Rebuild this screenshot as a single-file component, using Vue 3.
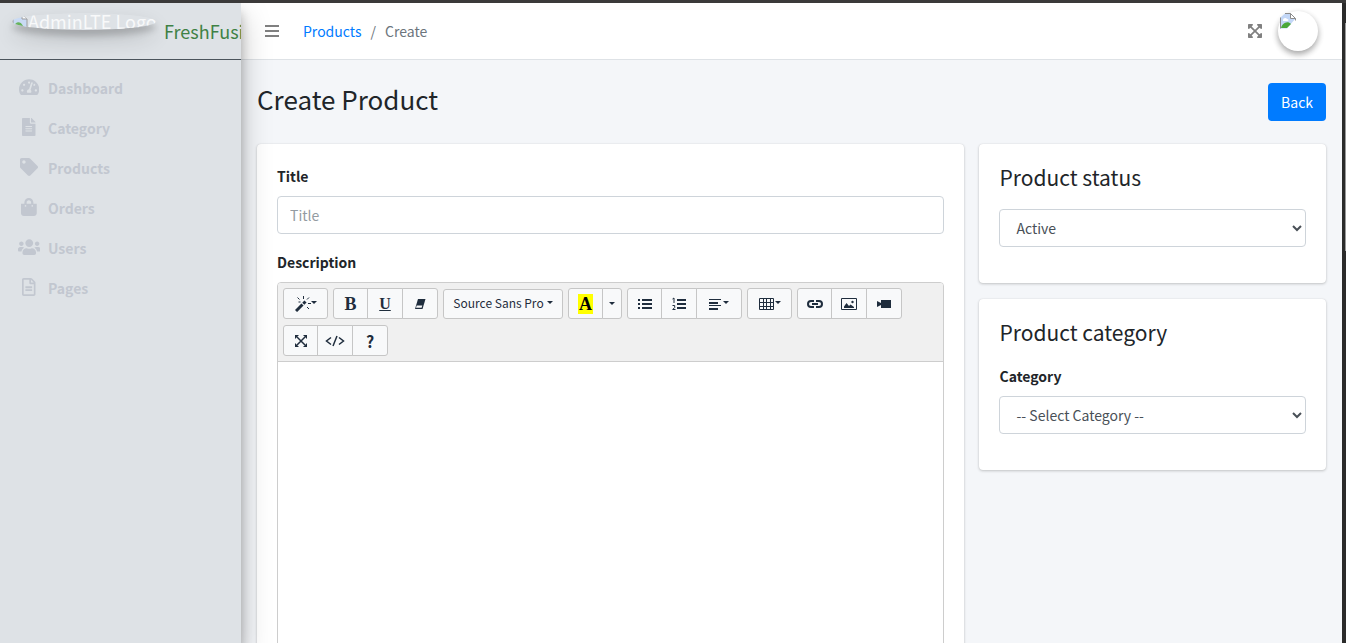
<script setup>
import { ref } from 'vue'

const fa = {
  gauge: { box: '0 0 576 512', d: 'M288 32C128.940 32 0 160.940 0 320c0 52.800 14.250 102.260 39.060 144.800 5.610 9.620 16.300 15.200 27.440 15.200h443c11.140 0 21.830-5.580 27.440-15.200C561.750 422.260 576 372.800 576 320c0-159.060-128.940-288-288-288zm0 64c14.710 0 26.580 10.130 30.320 23.650-1.110 2.260-2.640 4.230-3.450 6.670l-9.220 27.670c-5.130 3.490-10.970 6.010-17.640 6.010-17.670 0-32-14.330-32-32S270.330 96 288 96zM96 384c-17.670 0-32-14.330-32-32s14.330-32 32-32 32 14.330 32 32-14.330 32-32 32zm48-160c-17.670 0-32-14.330-32-32s14.330-32 32-32 32 14.330 32 32-14.330 32-32 32zm246.770-72.410l-61.330 184C343.130 347.330 352 364.540 352 384c0 11.720-3.380 22.550-8.880 32H232.880c-5.500-9.450-8.880-20.280-8.880-32 0-33.940 26.500-61.430 59.900-63.590l61.340-184.010c4.170-12.560 17.730-19.450 30.360-15.170 12.570 4.190 19.350 17.790 15.170 30.360zm14.660 57.200l15.520-46.550c3.470-1.290 7.130-2.230 11.050-2.230 17.670 0 32 14.330 32 32s-14.330 32-32 32c-11.380-.010-20.890-6.280-26.570-15.220zM480 384c-17.670 0-32-14.330-32-32s14.330-32 32-32 32 14.330 32 32-14.330 32-32 32z' },
  file: { box: '0 0 384 512', d: 'M224 136V0H24C10.700 0 0 10.700 0 24v464c0 13.300 10.700 24 24 24h336c13.300 0 24-10.700 24-24V160H248c-13.200 0-24-10.800-24-24zm64 236c0 6.600-5.400 12-12 12H108c-6.600 0-12-5.400-12-12v-8c0-6.600 5.400-12 12-12h168c6.600 0 12 5.400 12 12v8zm0-64c0 6.600-5.400 12-12 12H108c-6.600 0-12-5.400-12-12v-8c0-6.600 5.400-12 12-12h168c6.600 0 12 5.400 12 12v8zm0-72v8c0 6.600-5.400 12-12 12H108c-6.600 0-12-5.400-12-12v-8c0-6.600 5.400-12 12-12h168c6.600 0 12 5.400 12 12zm96-114.100v6.100H256V0h6.100c6.400 0 12.500 2.500 17 7l97.900 98c4.500 4.500 7 10.600 7 16.900z' },
  tag: { box: '0 0 512 512', d: 'M0 252.118V48C0 21.490 21.490 0 48 0h204.118a48 48 0 0 1 33.941 14.059l211.882 211.882c18.745 18.745 18.745 49.137 0 67.882L293.823 497.941c-18.745 18.745-49.137 18.745-67.882 0L14.059 286.059A48 48 0 0 1 0 252.118zM112 64c-26.510 0-48 21.490-48 48s21.490 48 48 48 48-21.490 48-48-21.490-48-48-48z' },
  bag: { box: '0 0 448 512', d: 'M352 160v-32C352 57.420 294.579 0 224 0 153.420 0 96 57.420 96 128v32H0v272c0 44.183 35.817 80 80 80h288c44.183 0 80-35.817 80-80V160h-96zm-192-32c0-35.290 28.710-64 64-64s64 28.710 64 64v32H160v-32zm160 120c-13.255 0-24-10.745-24-24s10.745-24 24-24 24 10.745 24 24-10.745 24-24 24zm-192 0c-13.255 0-24-10.745-24-24s10.745-24 24-24 24 10.745 24 24-10.745 24-24 24z' },
  users: { box: '0 0 640 512', d: 'M96 224c35.300 0 64-28.700 64-64s-28.700-64-64-64-64 28.700-64 64 28.700 64 64 64zm448 0c35.300 0 64-28.700 64-64s-28.700-64-64-64-64 28.700-64 64 28.700 64 64 64zm32 32h-64c-17.600 0-33.500 7.100-45.100 18.600 40.300 22.100 68.900 62 75.100 109.400h66c17.700 0 32-14.300 32-32v-32c0-35.300-28.700-64-64-64zm-256 0c61.900 0 112-50.100 112-112S381.900 32 320 32 208 82.100 208 144s50.100 112 112 112zm76.800 32h-8.300c-20.800 10-43.900 16-68.500 16s-47.600-6-68.500-16h-8.300C179.600 288 128 339.600 128 403.200V432c0 26.500 21.500 48 48 48h288c26.500 0 48-21.500 48-48v-28.800c0-63.600-51.600-115.200-115.200-115.200zm-223.700-13.400C161.500 263.100 145.600 256 128 256H64c-35.300 0-64 28.700-64 64v32c0 17.700 14.300 32 32 32h65.900c6.300-47.400 34.900-87.300 75.200-109.400z' },
  page: { box: '0 0 384 512', d: 'M288 248v28c0 6.600-5.400 12-12 12H108c-6.600 0-12-5.400-12-12v-28c0-6.600 5.400-12 12-12h168c6.600 0 12 5.400 12 12zm-12 72H108c-6.600 0-12 5.400-12 12v28c0 6.600 5.400 12 12 12h168c6.600 0 12-5.400 12-12v-28c0-6.600-5.400-12-12-12zm108-188.100V464c0 26.500-21.500 48-48 48H48c-26.500 0-48-21.500-48-48V48C0 21.500 21.500 0 48 0h204.100C264.800 0 277 5.100 286 14.100L369.900 98c9 8.900 14.100 21.200 14.100 33.900zm-128-80V128h76.100L256 51.900zM336 464V176H232c-13.300 0-24-10.700-24-24V48H48v416h288z' },
}

const expand = 'M448 344v112a23.940 23.940 0 0 1-24 24H312c-21.390 0-32.090-25.900-17-41l36.200-36.200L224 295.600 116.770 402.900 153 439c15.090 15.100 4.390 41-17 41H24a23.940 23.940 0 0 1-24-24V344c0-21.400 25.890-32.100 41-17l36.190 36.200L184.460 256 77.180 148.700 41 185c-15.100 15.100-41 4.400-41-17V56a23.940 23.940 0 0 1 24-24h112c21.390 0 32.090 25.900 17 41l-36.200 36.200L224 216.400l107.230-107.300L295 73c-15.090-15.100-4.390-41 17-41h112a23.940 23.940 0 0 1 24 24v112c0 21.400-25.890 32.100-41 17l-36.190-36.200L263.540 256l107.280 107.300L407 327.100c15.100-15.200 41-4.500 41 16.900z'

const menu = [
  { label: 'Dashboard', icon: fa.gauge },
  { label: 'Category', icon: fa.file },
  { label: 'Products', icon: fa.tag },
  { label: 'Orders', icon: fa.bag },
  { label: 'Users', icon: fa.users },
  { label: 'Pages', icon: fa.page },
]

const title = ref('')
const status = ref('1')
const category = ref('')
</script>

<template>
  <div class="shell">
    <div class="app">
      <aside class="sidebar">
        <a href="#" class="brand">
          <span class="brand-image">
            <svg class="broken" viewBox="0 0 16 16" aria-hidden="true">
              <path d="M1 1h9l5 5v9H1z" fill="#c5d9f8" stroke="#8b8b8b" />
              <path d="M2 14c1-5 6-7 9-1l1 1z" fill="#4ba83a" />
              <path d="M10 1v5h5" fill="#fff" stroke="#8b8b8b" />
            </svg>AdminLTE Logo</span>
          <span class="brand-text">FreshFusion</span>
        </a>
        <nav class="menu">
          <a v-for="item in menu" :key="item.label" href="#" class="menu-link">
            <span class="menu-icon">
              <svg :viewBox="item.icon.box" aria-hidden="true"><path :d="item.icon.d" fill="currentColor" /></svg>
            </span>
            <span>{{ item.label }}</span>
          </a>
        </nav>
      </aside>

      <div class="page">
        <header class="topbar">
          <button type="button" class="plain" aria-label="Toggle menu">
            <svg width="14" height="16" viewBox="0 0 14 16"><path d="M0 2h14v2H0zM0 7h14v2H0zM0 12h14v2H0z" fill="currentColor" /></svg>
          </button>
          <ol class="crumbs">
            <li><a href="#">Products</a></li>
            <li class="slash">/</li>
            <li>Create</li>
          </ol>
          <button type="button" class="plain fullscreen" aria-label="Fullscreen">
            <svg width="14" height="16" viewBox="0 0 448 512"><path :d="expand" fill="currentColor" /></svg>
          </button>
          <a href="#" class="avatar" aria-label="Account">
            <svg width="16" height="16" viewBox="0 0 16 16">
              <path d="M.5 4.500L5 .5h5.500l5 5L7 15.500H.5z" fill="#c3d7f7" />
              <path d="M.5 15.500v-11M5 .5h5.500l5 5v2" fill="none" stroke="#8c8c8c" />
              <path d="M3 7c0-2 3-3 4-1 2 0 2 2 0 2H3z" fill="#fff" />
              <path d="M1 15c1-4 6-8 10-4l-4 4z" fill="#4ba83a" />
              <path d="M10.500.5v5h5z" fill="#fff" stroke="#8c8c8c" />
              <path d="M16 8v8H8z" fill="#fff" />
            </svg>
          </a>
        </header>

        <main class="content">
          <div class="heading">
            <h1>Create Product</h1>
            <a href="#" class="back">Back</a>
          </div>

          <div class="columns">
            <section class="card">
              <div class="field">
                <label for="title">Title</label>
                <input id="title" v-model="title" type="text" placeholder="Title">
              </div>
              <div class="field">
                <label for="description">Description</label>
                <div class="editor">
                  <div class="toolbar">
                    <div class="group">
                      <button type="button" class="wide" aria-label="Style">
                        <svg width="16" height="16" viewBox="0 0 16 16" fill="none" stroke="currentColor">
                          <path d="M1 15L7.500 8.500" stroke-width="3" /><path d="M8.300 7.700L10.500 5.500" stroke-width="3" />
                          <path d="M8.500 0v3M2.500 1.500l2 2M14 1.500l-2 2M13 7.500h3M3.500 6h2M14 13l-2-2" />
                        </svg><i class="caret"></i>
                      </button>
                    </div>
                    <div class="group">
                      <button type="button" class="serif"><b>B</b></button>
                      <button type="button" class="serif"><u>U</u></button>
                      <button type="button" aria-label="Remove format">
                        <svg width="12" height="12" viewBox="0 0 12 12"><path d="M4 1h7.500L8.500 11H1z" fill="currentColor" /><path d="M2.700 7.500h5.600l-.7 2.300H2z" fill="#f8f9fa" /></svg>
                      </button>
                    </div>
                    <div class="group">
                      <button type="button" class="font">Source Sans Pro<i class="caret"></i></button>
                    </div>
                    <div class="group">
                      <button type="button" class="serif" aria-label="Recent color"><b class="mark">A</b></button>
                      <button type="button" class="narrow" aria-label="More colors"><i class="caret"></i></button>
                    </div>
                    <div class="group">
                      <button type="button" aria-label="Unordered list">
                        <svg width="14" height="14" viewBox="0 0 14 14" fill="currentColor"><path d="M0 2h2v2H0zM0 6h2v2H0zM0 10h2v2H0zM4 2h10v2H4zM4 6h10v2H4zM4 10h10v2H4z" /></svg>
                      </button>
                      <button type="button" aria-label="Ordered list">
                        <svg width="14" height="14" viewBox="0 0 14 14"><path d="M5 2h9v2H5zM5 6h9v2H5zM5 10h9v2H5z" fill="currentColor" /><path d="M.5 2L2 1v5M.5 8.500h2.200v2L.7 12.500H3.500" fill="none" stroke="currentColor" /></svg>
                      </button>
                      <button type="button" class="wide" aria-label="Paragraph">
                        <svg width="14" height="14" viewBox="0 0 14 14" fill="currentColor"><path d="M0 2h12v1H0zM0 5h9v2H0zM0 8h12v1H0zM0 11h9v2H0z" /></svg><i class="caret"></i>
                      </button>
                    </div>
                    <div class="group">
                      <button type="button" class="wide" aria-label="Table">
                        <svg width="16" height="14" viewBox="0 0 16 14" fill="none" stroke="currentColor"><path d="M.5 1.500h14v11H.5zM.5 5.500h14M.5 9.500h14M4.500 1v11M7.500 1v11M11.500 1v11" /></svg><i class="caret"></i>
                      </button>
                    </div>
                    <div class="group">
                      <button type="button" aria-label="Link">
                        <svg width="16" height="10" viewBox="0 0 16 10" fill="none" stroke="currentColor" stroke-width="2"><path d="M7 2H4a3 3 0 0 0 0 6h3M9 2h3a3 3 0 0 1 0 6H9M5 5h6" /></svg>
                      </button>
                      <button type="button" aria-label="Picture">
                        <svg width="16" height="12" viewBox="0 0 16 12"><path d="M.5.5h15v11H.5z" fill="none" stroke="currentColor" /><path d="M3 10V8.500L5.500 5 8 8l1.500-1.500L13 9v1z" fill="currentColor" /><circle cx="11.500" cy="4" r="1.200" fill="currentColor" /></svg>
                      </button>
                      <button type="button" aria-label="Video">
                        <svg width="16" height="10" viewBox="0 0 16 10"><path d="M1 2l4 2V1h10v8H5V6L1 8z" fill="currentColor" /></svg>
                      </button>
                    </div>
                    <div class="group">
                      <button type="button" aria-label="Full screen">
                        <svg width="12" height="12" viewBox="0 0 12 12"><path d="M2 2l8 8M10 2l-8 8" stroke="currentColor" stroke-width="1.500" /><path d="M0 0h4L0 4zM12 0H8l4 4zM0 12V8l4 4zM12 12H8l4-4z" fill="currentColor" /></svg>
                      </button>
                      <button type="button" aria-label="Code view">
                        <svg width="20" height="12" viewBox="0 0 20 12" fill="none" stroke="currentColor" stroke-width="1.500"><path d="M6 2.500L1.500 6 6 9.500M14 2.500L18.500 6 14 9.500M12 1L8 11" /></svg>
                      </button>
                      <button type="button" class="help">?</button>
                    </div>
                  </div>
                  <div id="description" class="editable" contenteditable="true" role="textbox" aria-label="Description"></div>
                </div>
              </div>
            </section>

            <div class="side">
              <section class="card">
                <h2>Product status</h2>
                <div class="field">
                  <select v-model="status" aria-label="Product status">
                    <option value="1">Active</option>
                    <option value="0">Block</option>
                  </select>
                </div>
              </section>
              <section class="card">
                <h2>Product category</h2>
                <div class="field">
                  <label for="category">Category</label>
                  <select id="category" v-model="category">
                    <option value="">-- Select Category --</option>
                  </select>
                </div>
              </section>
            </div>
          </div>
        </main>
      </div>
    </div>
    <div class="rail"><div class="thumb"></div></div>
  </div>
</template>

<style>
html, body { margin: 0; background: #f4f6f9; }
</style>

<style scoped>
* { box-sizing: border-box; }
.shell {
  display: flex;
  height: 100vh;
  overflow: hidden;
  border-top: 3px solid #3b3a3a;
  color: #212529;
  font: 14px/24px "Noto Sans CJK SC", "Noto Sans", sans-serif;
}
a { color: #007bff; text-decoration: none; }
button, input, select { font: inherit; }
svg { display: block; flex: none; }
.app { display: flex; flex: 1; min-width: 0; }
.rail { width: 4px; background: #2b2b2b; padding: 20px 0 0 3px; }
.thumb { height: 228px; background: #9a9a9a; }

.sidebar {
  position: relative;
  z-index: 2;
  flex: none;
  width: 241px;
  background: #dee2e6;
  box-shadow: 0 14px 28px rgba(0, 0, 0, .25), 0 10px 10px rgba(0, 0, 0, .22);
}
.brand {
  display: flex;
  align-items: center;
  gap: 8px;
  height: 57px;
  padding-left: 12px;
  overflow: hidden;
  border-bottom: 1px solid #4b545c;
  font-size: 18px;
  white-space: nowrap;
}
.brand-image {
  display: flex;
  align-items: center;
  flex: none;
  width: 144px;
  height: 17px;
  margin-bottom: 20px;
  overflow: hidden;
  border-radius: 50%;
  box-shadow: 0 10px 20px rgba(0, 0, 0, .19), 0 6px 6px rgba(0, 0, 0, .23);
  color: #fff;
  opacity: .8;
}
.broken { width: 16px; height: 16px; }
.brand-text { color: #3f8145; }
.menu { padding: 8px; }
.menu-link {
  display: flex;
  align-items: center;
  gap: 6px;
  height: 40px;
  padding-left: 8px;
  color: #c2c7d0;
  font-weight: 700;
}
.menu-icon { display: flex; justify-content: center; width: 26px; }
.menu-icon svg { height: 18px; margin-bottom: 3px; }

.page { flex: 1; min-width: 0; }
.topbar {
  display: flex;
  align-items: center;
  height: 57px;
  padding: 0 24px;
  background: #fff;
  border-bottom: 1px solid #dee2e6;
}
.plain { padding: 0; border: 0; background: none; color: #808080; }
.crumbs {
  display: flex;
  gap: 9px;
  flex: 1;
  margin: 0;
  padding: 0 0 0 24px;
  list-style: none;
  color: #6c757d;
}
.fullscreen { margin-right: 16px; }
.avatar {
  width: 40px;
  height: 40px;
  padding: 2px;
  border-radius: 50%;
  background: #fff;
  box-shadow: 0 3px 6px rgba(0, 0, 0, .16), 0 3px 6px rgba(0, 0, 0, .23);
}

.content { padding: 23px 16px 0 16px; }
.heading { display: flex; justify-content: space-between; align-items: flex-start; margin-bottom: 23px; }
h1, h2 { margin: 0; font-weight: 400; }
h1 { font-size: 26px; line-height: 32px; }
h2 { margin-bottom: 18px; font-size: 21px; line-height: 27px; }
.back { padding: 7px 13px; border-radius: 4px; background: #007bff; color: #fff; }

.columns { display: grid; grid-template-columns: 49fr 24fr; gap: 15px; align-items: start; }
.side { display: grid; gap: 16px; }
.card {
  min-width: 0;
  padding: 20px;
  border-radius: 4px;
  background: #fff;
  box-shadow: 0 0 1px rgba(0, 0, 0, .13), 0 1px 3px rgba(0, 0, 0, .2);
}
.field { margin-bottom: 16px; }
label { display: block; margin-bottom: 8px; font-weight: 700; }
input, select {
  display: block;
  width: 100%;
  height: 38px;
  padding: 0 12px;
  border: 1px solid #ced4da;
  border-radius: 4px;
  background: #fff;
  color: #495057;
}
input::placeholder { color: #939ba2; opacity: 1; }

.editor { border: 1px solid #cdcdcd; border-radius: 4px; overflow: hidden; }
.toolbar {
  display: flex;
  flex-wrap: wrap;
  align-items: center;
  gap: 6px 5px;
  padding: 5px;
  border-bottom: 1px solid #cdcdcd;
  background: #f0f0f0;
}
.group { display: flex; }
.group button {
  display: flex;
  align-items: center;
  justify-content: center;
  width: 36px;
  height: 31px;
  margin-left: -1px;
  padding: 0;
  border: 1px solid #c6c6c6;
  background: #f8f9fa;
  color: #1f2d3d;
}
.group button:first-child { margin-left: 0; border-radius: 3px 0 0 3px; }
.group button:first-child:nth-last-child(n + 2) { width: 35px; }
.group button:last-child { border-radius: 0 3px 3px 0; }
.group button:only-child { border-radius: 3px; }
.group button.wide { width: 46px; }
.group button.wide:only-child { width: 45px; }
.group button.narrow { width: 20px; }
.group button.font { width: 120px; height: 30px; padding-bottom: 2px; font-size: 12px; gap: 3px; }
.group button.serif { font: 18px/20px "Liberation Serif", serif; }
.group button.serif u { font-weight: 700; font-size: 16px; }
.group button.help { font-weight: 700; font-size: 16px; }
.mark { padding: 0 1px; background: #ff0; color: #000; }
.caret { border: 3px solid transparent; border-top-color: currentColor; border-bottom: 0; }
.wide .caret { margin-bottom: 3px; }
.editable { min-height: 400px; background: #fff; outline: 0; }
</style>
